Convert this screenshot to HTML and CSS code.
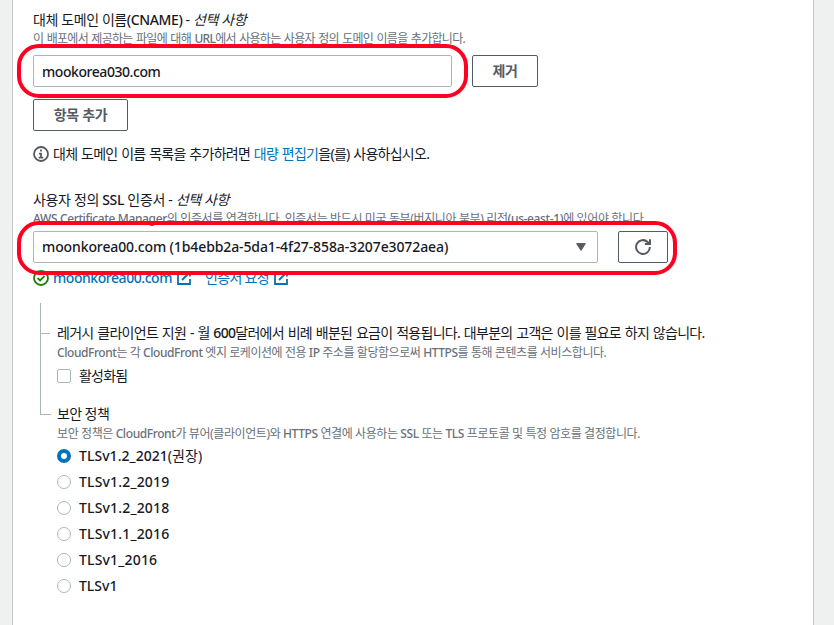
FILE: index.html
```
<!DOCTYPE html>
<html lang="ko">
<head>
<meta charset="utf-8">
<title>CloudFront</title>
<link rel="stylesheet" href="styles.css">
</head>
<body>
<main class="panel">
  <section class="field">
    <h3 class="label t1">대체 도메인 이름<b>(CNAME)</b> - <i>선택 사항</i></h3>
    <p class="hint t2">이 배포에서 제공하는 파일에 대해 <b>URL</b>에서 사용하는 사용자 정의 도메인 이름을 추가합니다.</p>
    <div class="row domain-row">
      <div class="control domain"><span class="t3">mookorea030.com</span></div>
      <button class="btn remove">제거</button>
      <div class="mark mark-domain"></div>
    </div>
    <button class="btn add">항목 추가</button>
    <p class="info">
      <svg class="icon" viewBox="0 0 16 16"><circle cx="8" cy="8" r="7" fill="none" stroke="#545b64" stroke-width="1.8"/><path d="M8 3.400v2.200M6 7.600h2v4M5.700 11.600h4.600" fill="none" stroke="#545b64" stroke-width="1.8"/></svg>
      <span class="t6">대체 도메인 이름 목록을 추가하려면 <a>대량 편집기</a>을(를) 사용하십시오.</span>
    </p>
  </section>
  <section class="field cert">
    <h3 class="label t7">사용자 정의 <b>SSL</b> 인증서 - <i>선택 사항</i></h3>
    <p class="hint t8"><b>AWS Certificate Manager</b>의 인증서를 연결합니다. 인증서는 반드시 미국 동부(버지니아 북부) 리전<b>(us-east-1)</b>에 있어야 합니다.</p>
    <div class="row cert-row">
      <div class="control select"><span class="t9">moonkorea00.com (1b4ebb2a-5da1-4f27-858a-3207e3072aea)</span>
        <svg class="caret" viewBox="0 0 10 8"><path d="M.6.6h8.800L5 7.400z" fill="#545b64" stroke="#545b64" stroke-linejoin="round"/></svg></div>
      <button class="btn refresh"><svg viewBox="0 0 16 16"><path d="M14.900 8A6.900 6.900 0 1 1 12.600 2.900L14.600 4.700M15 .2V5.100H9.900" fill="none" stroke="#545b64" stroke-width="2"/></svg></button>
      <div class="mark mark-cert"></div>
    </div>
    <p class="links">
      <svg class="icon" viewBox="0 0 16 16"><circle cx="8" cy="8" r="7" fill="none" stroke="#1d8102" stroke-width="1.8"/><path d="M4.600 8l2.500 2.500 4.400-4.400" fill="none" stroke="#1d8102" stroke-width="1.8"/></svg>
      <a class="t10">moonkorea00.com</a>
      <svg class="ext" viewBox="0 0 14 14"><path d="M6 1H1v12h12V8M8.500 1H13v4.500M13 1L5 9" fill="none" stroke="#0073bb" stroke-width="1.8"/></svg>
      <a class="t11">인증서 요청</a>
      <svg class="ext" viewBox="0 0 14 14"><path d="M6 1H1v12h12V8M8.500 1H13v4.500M13 1L5 9" fill="none" stroke="#0073bb" stroke-width="1.8"/></svg>
    </p>
  </section>
  <div class="tree">
    <section class="branch legacy">
      <h3 class="label t12">레거시 클라이언트 지원 - 월 <b>600</b>달러에서 비례 배분된 요금이 적용됩니다. 대부분의 고객은 이를 필요로 하지 않습니다.</h3>
      <p class="hint t13"><b>CloudFront</b>는 각 <b>CloudFront</b> 엣지 로케이션에 전용 <b>IP</b> 주소를 할당함으로써 <b>HTTPS</b>를 통해 콘텐츠를 서비스합니다.</p>
      <div class="option enable"><i class="box"></i><span class="t14">활성화됨</span></div>
    </section>
    <section class="branch policy">
      <h3 class="label t15">보안 정책</h3>
      <p class="hint t16">보안 정책은 <b>CloudFront</b>가 뷰어(클라이언트)와 <b>HTTPS</b> 연결에 사용하는 <b>SSL</b> 또는 <b>TLS</b> 프로토콜 및 특정 암호를 결정합니다.</p>
      <div class="options">
        <div class="option"><i class="dot on"></i><span class="t17">TLSv1.2_2021<span class="note">(권장)</span></span></div>
        <div class="option"><i class="dot"></i><span class="t18">TLSv1.2_2019</span></div>
        <div class="option"><i class="dot"></i><span class="t18">TLSv1.2_2018</span></div>
        <div class="option"><i class="dot"></i><span class="t18">TLSv1.1_2016</span></div>
        <div class="option"><i class="dot"></i><span class="t18">TLSv1_2016</span></div>
        <div class="option"><i class="dot"></i><span>TLSv1</span></div>
      </div>
    </section>
  </div>
</main>
</body>
</html>
```
FILE: styles.css
```
* { box-sizing: border-box; }
body {
  margin: 0;
  height: 625px;
  overflow: hidden;
  background: #eff0f0;
  color: #16191f;
  font: 500 14px/20px "Noto Sans", "Noto Sans CJK KR", sans-serif;
  white-space: nowrap;
}
h3, p { margin: 0; font-weight: 400; font-size: 14px; }
b { font-weight: 500; }
a { color: #0073bb; }
.panel {
  width: 802px;
  height: 625px;
  margin-left: 12px;
  padding: 10px 0 0 20px;
  background: #fff;
  border: solid #c3c8c8;
  border-width: 0 1px;
}
.label { height: 20px; }
.hint { height: 16px; font-size: 12px; line-height: 18px; color: #687078; }
.row { position: relative; display: flex; }
.control {
  display: flex;
  align-items: center;
  justify-content: space-between;
  height: 32px;
  padding: 0 11px 0 8px;
  border: 1px solid #aab7b8;
  border-radius: 2px;
}
.btn {
  height: 32px;
  padding: 0;
  display: flex;
  align-items: center;
  justify-content: center;
  border: 1px solid #545b64;
  border-radius: 2px;
  background: #fff;
  color: #545b64;
  font: 700 14px/20px "Noto Sans", "Noto Sans CJK KR", sans-serif;
  letter-spacing: -.3px;
}
.domain-row { margin-top: 9px; gap: 20px; }
.domain { width: 419px; padding-top: 1px; }
.remove { width: 66px; }
.add { width: 95px; margin-top: 12px; }
.info, .links { display: flex; align-items: center; height: 20px; }
.info { margin-top: 13px; }
.icon { width: 16px; height: 16px; margin-right: 4px; flex: none; }
.mark { position: absolute; left: -16px; border: 4px solid #ff0022; border-radius: 22px; }
.mark-domain { top: -11px; width: 451px; height: 54px; }
.mark-cert { top: -10px; width: 660px; height: 54px; }
.cert { margin-top: 26px; }
.cert-row { margin-top: 5px; gap: 20px; }
.select { width: 565px; }
.caret { width: 10px; height: 8px; }
.refresh { width: 50px; }
.refresh svg { width: 16px; height: 16px; }
.links { margin-top: 5px; }
.ext { width: 14px; height: 14px; margin: 0 14px 0 5px; }
.tree { position: relative; margin: 15px 0 0 7px; padding: 20px 0 0 17px; }
.tree::before {
  content: "";
  position: absolute;
  left: 0;
  top: 0;
  width: 10px;
  height: 111px;
  border: solid #aab7b8;
  border-width: 0 0 1px 1px;
}
.legacy { position: relative; }
.legacy::before {
  content: "";
  position: absolute;
  left: -16px;
  top: 10px;
  width: 9px;
  height: 1px;
  background: #aab7b8;
}
.legacy .hint { margin-top: 1px; }
.option { display: flex; align-items: center; gap: 8px; height: 20px; }
.enable { margin-top: 6px; font-weight: 400; }
.box, .dot { width: 14px; height: 14px; border: 1px solid #aab7b8; border-radius: 2px; background: #fff; }
.dot { border-radius: 50%; }
.dot.on { border: 4px solid #0073bb; }
.note { font-weight: 400; }
.policy { margin-top: 17px; }
.policy .label { line-height: 21px; }
.policy .hint { margin-top: 2px; }
.options { display: grid; gap: 6px; margin-top: 5px; }

/* Tracking per line of text */
.t1 { letter-spacing: -.4px; }
.t2 { letter-spacing: -.7px; word-spacing: .9px; }
.t3 { letter-spacing: -.44px; }
.t6 { letter-spacing: -.73px; word-spacing: .8px; }
.t7 { letter-spacing: -.35px; }
.t8 { letter-spacing: -.37px; }
.t9 { letter-spacing: -.11px; }
.t10 { letter-spacing: -.45px; font-weight: 500; }
.t11 { letter-spacing: -.67px; font-weight: 400; }
.t12 { letter-spacing: -.71px; word-spacing: .8px; }
.t13 { letter-spacing: -.43px; }
.t14 { letter-spacing: -.8px; }
.t15 { letter-spacing: -.6px; }
.t16 { letter-spacing: -.4px; }
.t17 { letter-spacing: .04px; }
.t18 { letter-spacing: .17px; }
```
